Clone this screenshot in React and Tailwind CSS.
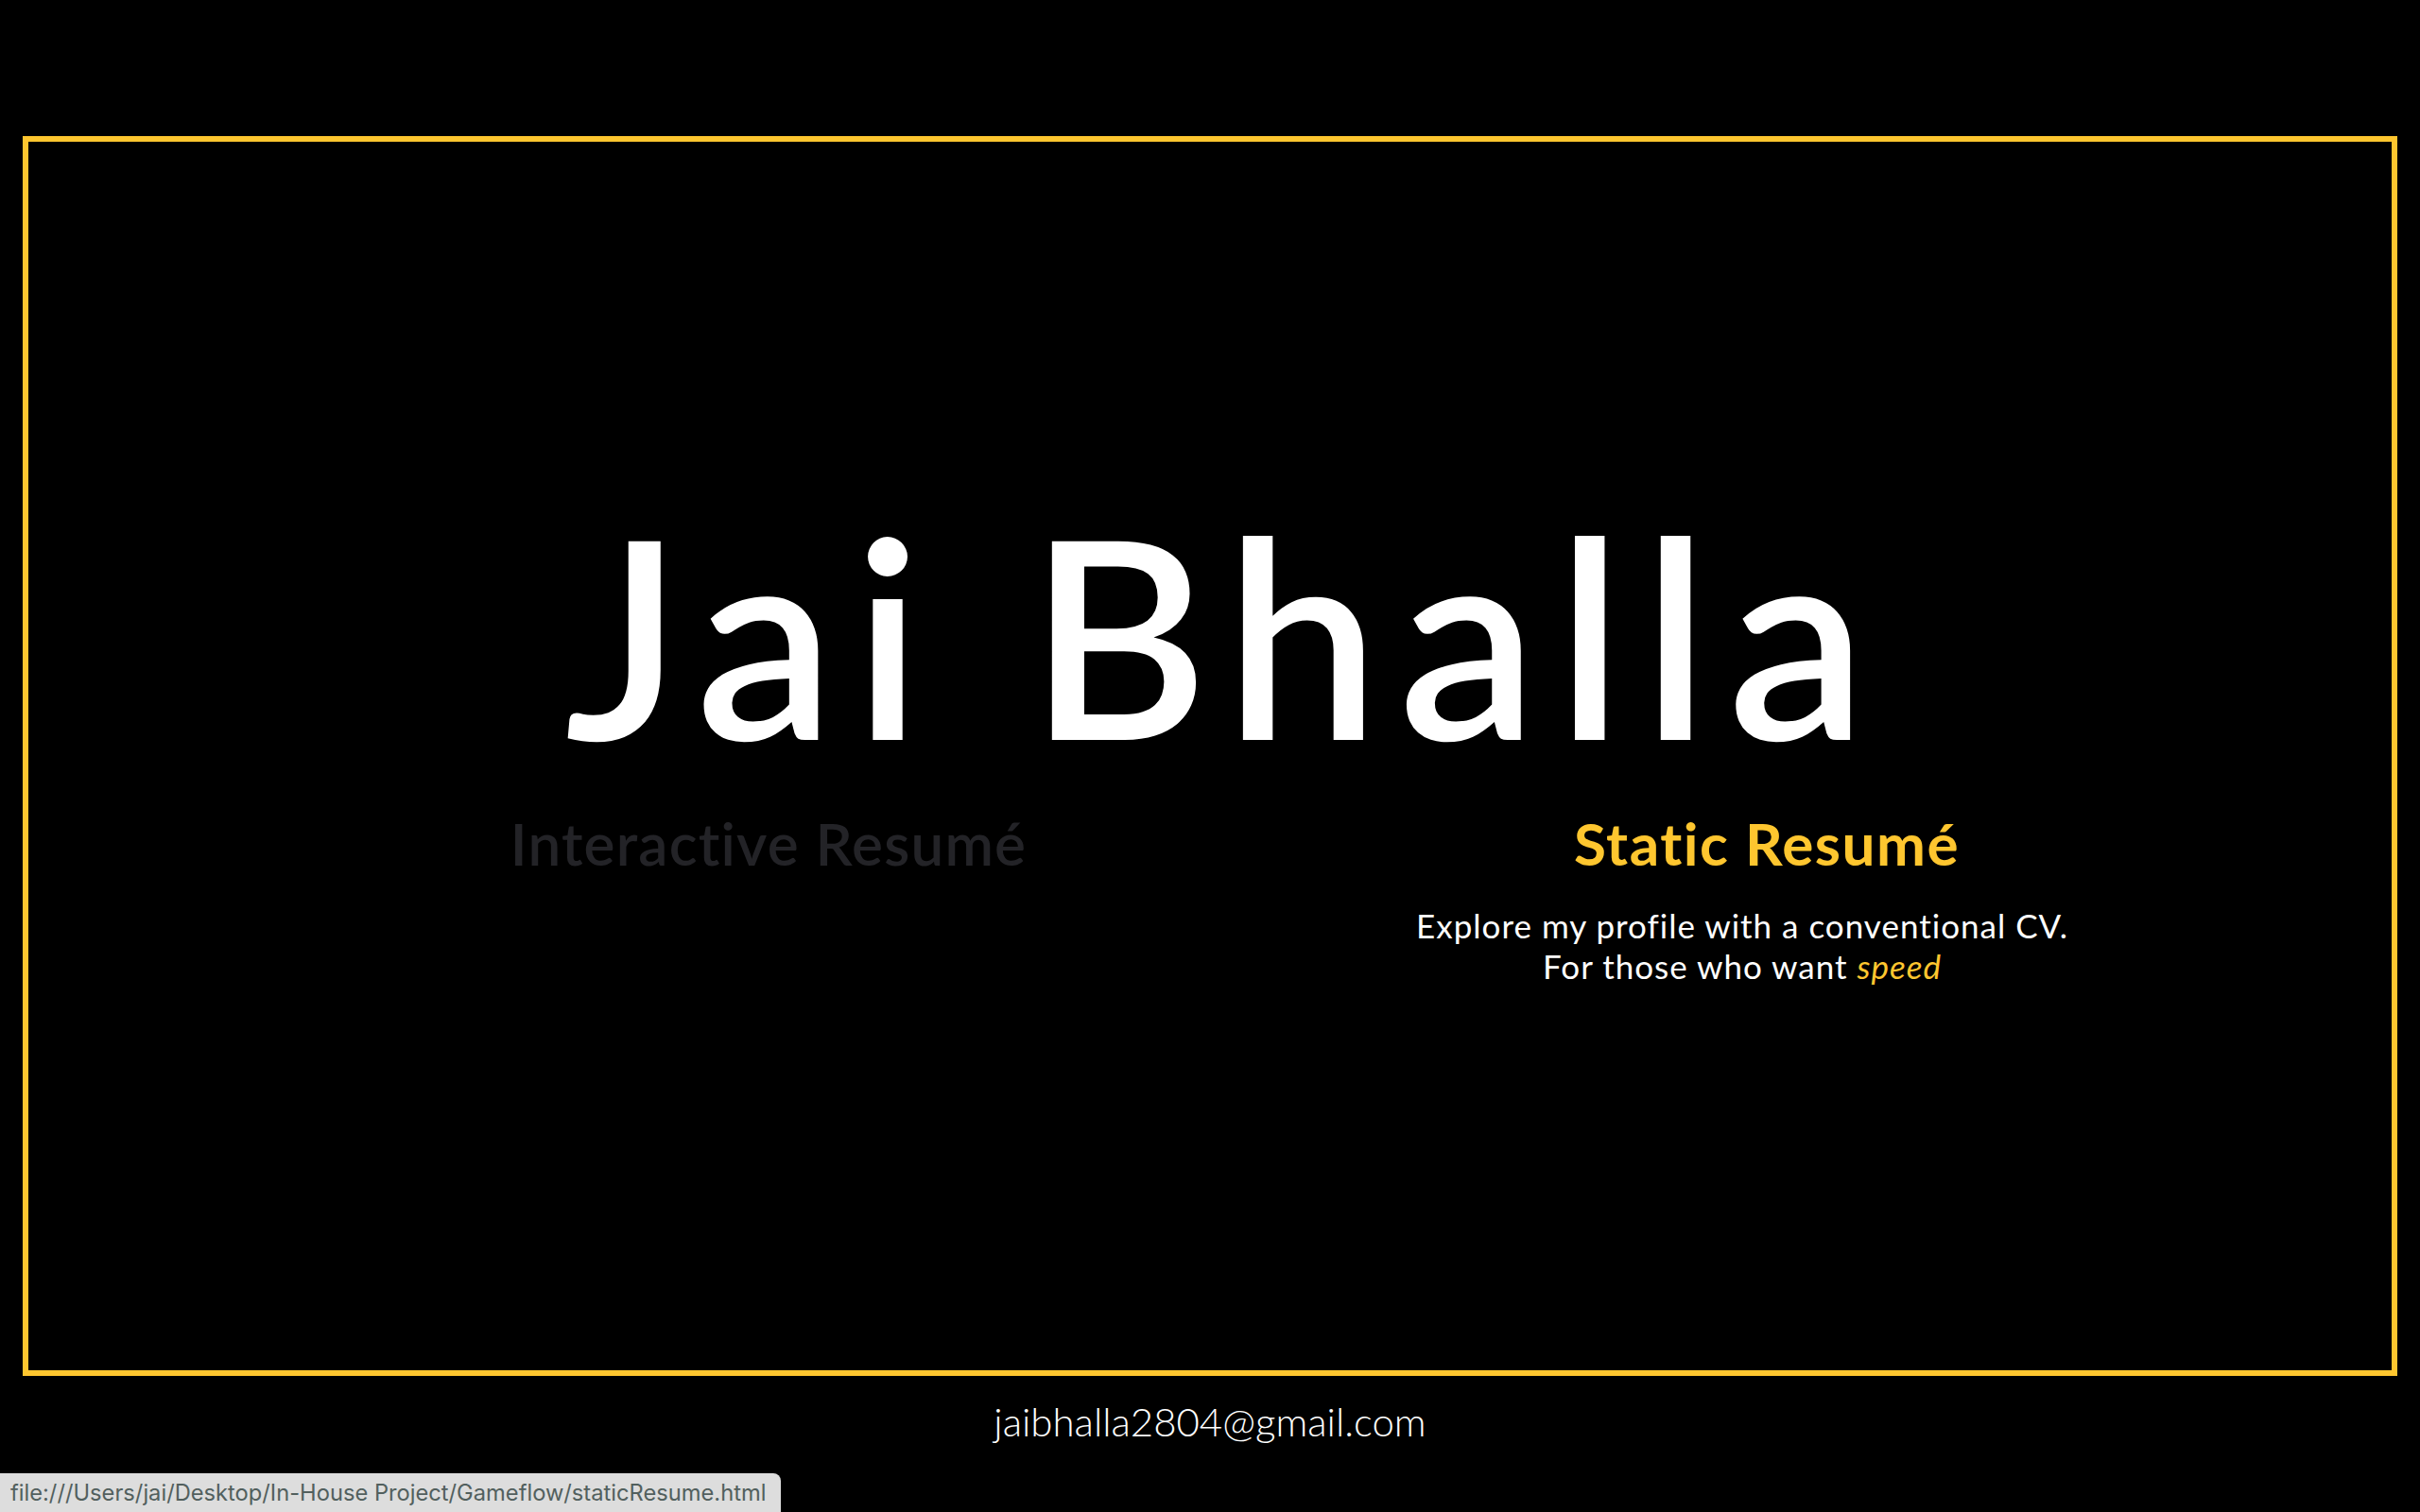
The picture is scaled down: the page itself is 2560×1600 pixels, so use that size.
import React from 'react';

const YELLOW = 'text-[#fec62f]';

export default function App() {
  return (
    <div className="relative min-h-[1600px] w-full bg-black font-['Lato','Noto_Sans',sans-serif] text-white [font-variant-ligatures:none]">
      <div className="h-[144px]" />

      {/* main frame */}
      <section className="mx-[24px] flex h-[1312px] flex-col items-center border-[6px] border-[#fec62f]">
        <h1 className="mt-[374px] pl-[32px] text-[292px] font-semibold leading-[292px] tracking-[20px]">
          Jai Bhalla
        </h1>

        <div className="mt-[44px] ml-[333px] flex gap-[130px] self-start">
          <div className="w-[900px] text-center">
            <h2 className="text-[62px] font-semibold leading-[64px] tracking-[1.2px] text-[#232327]">
              Interactive Resumé
            </h2>
          </div>

          <div className="w-[900px] text-center">
            <h2 className={`pl-[52px] text-[62px] font-bold leading-[64px] tracking-[1.5px] ${YELLOW}`}>
              Static Resumé
            </h2>
            <p className="mt-[34px] text-[35px] leading-[43px] tracking-[1px]">
              Explore my profile with a conventional CV.
              <br />
              For those who want <em className={`italic ${YELLOW}`}>speed</em>
            </p>
          </div>
        </div>
      </section>

      <p className="mt-[23px] text-center text-[42px] font-light leading-[50px]">
        jaibhalla2804@gmail.com
      </p>

      {/* browser status bubble */}
      <div className="absolute bottom-0 left-0 flex h-[41px] w-[826px] items-center rounded-tr-lg bg-[#dddddd] pl-[11px] font-['Inter',sans-serif] text-[23.7px] text-[#52605e]">
        file:///Users/jai/Desktop/In-House Project/Gameflow/staticResume.html
      </div>
    </div>
  );
}
